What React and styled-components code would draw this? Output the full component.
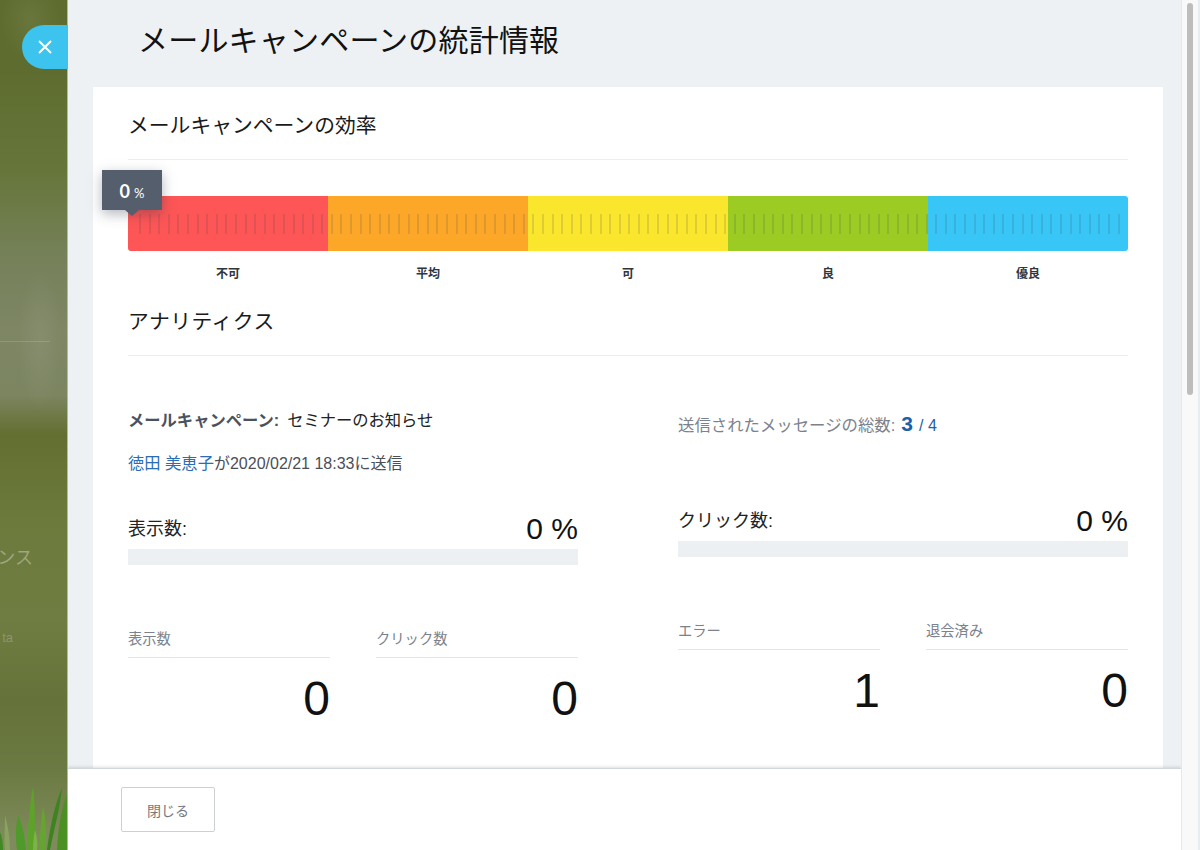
import React from 'react'
import styled, { createGlobalStyle } from 'styled-components'

const GlobalStyle = createGlobalStyle`
  html, body {
    margin: 0;
    height: 100%;
    overflow: hidden;
  }
  body {
    font-family: "Liberation Sans", "Noto Sans CJK JP", sans-serif;
    color: #1c1c1e;
    background: #fff;
  }
  * {
    box-sizing: border-box;
  }
`

const Page = styled.div`
  display: flex;
  width: 1200px;
  height: 850px;
  overflow: hidden;
`

const Backdrop = styled.aside`
  position: relative;
  flex: 0 0 68px;
  overflow: hidden;
  background:
    radial-gradient(ellipse 22px 70px at 40px 340px, rgba(150, 155, 130, .35), transparent),
    radial-gradient(ellipse 30px 40px at 30px 20px, rgba(130, 140, 90, .3), transparent),
    linear-gradient(
      180deg,
      #5f6c30 0,
      #5e6c2f 70px,
      #66763a 170px,
      #76815a 260px,
      #7e8664 330px,
      #7c8560 395px,
      #626f30 435px,
      #6c7a3c 520px,
      #6f7d42 620px,
      #65733a 700px,
      #6b7a42 770px,
      #7f8b5c 840px
    );
  border-right: 1px solid #b3b99a;
`

const BackdropRule = styled.div`
  position: absolute;
  left: 0;
  top: 341px;
  width: 50px;
  height: 1px;
  background: rgba(255, 255, 255, .14);
`

const BackdropText = styled.span`
  position: absolute;
  top: ${p => p.$top}px;
  right: ${p => p.$right}px;
  font-size: ${p => p.$size}px;
  line-height: 1;
  white-space: nowrap;
  color: rgba(255, 255, 255, ${p => p.$alpha});
`

const Grass = styled.svg`
  position: absolute;
  left: 0;
  bottom: 0;
  width: 67px;
  height: 64px;
  filter: blur(.4px);
`

const CloseTab = styled.button`
  position: absolute;
  left: 22px;
  top: 25px;
  z-index: 5;
  display: flex;
  align-items: center;
  justify-content: flex-start;
  width: 46px;
  height: 44px;
  padding: 0 0 0 16px;
  border: 0;
  border-radius: 22px 0 0 22px;
  background: #3cc3ee;
`

const Panel = styled.main`
  flex: 1;
  display: flex;
  flex-direction: column;
  min-width: 0;
`

const Content = styled.div`
  flex: 1;
  min-height: 0;
  overflow: hidden;
  padding: 0 18px 0 25px;
  background: #edf1f4;
`

const PageTitle = styled.h1`
  margin: 0;
  height: 87px;
  padding: 19px 0 0 45px;
  font-size: 30px;
  line-height: 44px;
  font-weight: 400;
  letter-spacing: .2px;
  color: #111;
`

const Card = styled.div`
  min-height: 700px;
  padding: 0 35px;
  background: #fff;
`

const SectionTitle = styled.h2`
  margin: 0;
  height: 73px;
  padding-top: 24px;
  font-size: 20.8px;
  line-height: 30px;
  font-weight: 400;
  color: #1a1a1a;
  border-bottom: 1px solid #ebedef;
`

const Meter = styled.div`
  position: relative;
  height: 55px;
  margin-top: 36px;
`

const MeterBands = styled.div`
  display: flex;
  height: 100%;
  border-radius: 3px;
  overflow: hidden;
`

const MeterBand = styled.div`
  flex: 1;
  background: ${p => p.$color};
`

const TickRow = styled.div`
  position: absolute;
  left: 11px;
  right: 8px;
  top: 18px;
  bottom: 17px;
  display: flex;
  justify-content: space-between;
`

const Tick = styled.i`
  width: 2px;
  background: rgba(70, 70, 80, .16);
`

const Marker = styled.div`
  position: absolute;
  z-index: 2;
  left: -26px;
  top: -26px;
  width: 60px;
  height: 40px;
  display: flex;
  align-items: baseline;
  justify-content: center;
  gap: 4px;
  padding-top: 10px;
  color: #fff;
  font-family: Lato, "Liberation Sans", sans-serif;
  font-size: 18px;
  line-height: 22px;
  font-weight: 700;
  background: #555e6c;
  box-shadow: 0 4px 12px rgba(40, 50, 70, .35);
  &::after {
    content: "";
    position: absolute;
    left: 23px;
    top: 40px;
    border: 7px solid transparent;
    border-top: 6px solid #555e6c;
    border-bottom: 0;
  }
`

const MarkerUnit = styled.span`
  font-size: 13px;
  font-weight: 400;
`

const MeterLabels = styled.div`
  display: flex;
  margin-top: 15px;
`

const MeterLabel = styled.div`
  flex: 1;
  text-align: center;
  font-size: 12px;
  line-height: 16px;
  font-weight: 700;
  color: #2e3640;
`

const AnalyticsTitle = styled(SectionTitle)`
  height: 67px;
  padding-top: 18px;
  margin-top: 7px;
  letter-spacing: .5px;
`

const Columns = styled.div`
  display: grid;
  grid-template-columns: 450px 450px;
  justify-content: space-between;
`

const Column = styled.section`
  padding-top: ${p => p.$top}px;
`

const CampaignLine = styled.div`
  display: flex;
  gap: 8px;
  font-size: 16.3px;
  line-height: 22px;
  color: #222;
`

const CampaignKey = styled.strong`
  color: #4a5260;
  font-weight: 700;
`

const SentLine = styled.div`
  margin-top: 21px;
  font-size: 16px;
  line-height: 22px;
  color: #4a4f57;
`

const SenderLink = styled.a`
  color: #2a6db5;
  font-size: 16.3px;
`

const TotalLine = styled.div`
  display: flex;
  align-items: baseline;
  font-size: 16.4px;
  line-height: 24px;
  color: #7b828c;
`

const TotalValue = styled.strong`
  margin-left: 6px;
  font-size: 21px;
  color: #1f5fa8;
`

const TotalRest = styled.span`
  margin-left: 6px;
  font-size: 16px;
  color: #1f5fa8;
`

const RateHead = styled.div`
  display: flex;
  align-items: center;
  justify-content: space-between;
  margin-top: ${p => p.$top}px;
`

const RateName = styled.span`
  font-size: 18px;
  line-height: 24px;
  color: #222;
`

const RateValue = styled.span`
  font-size: 30px;
  line-height: 32px;
  color: #111;
`

const RateTrack = styled.div`
  height: 16px;
  margin-top: 4px;
  background: #ecf0f2;
`

const Stats = styled.div`
  display: grid;
  grid-template-columns: 202px 202px;
  justify-content: space-between;
  margin-top: 65px;
`

const StatName = styled.div`
  height: 28px;
  font-size: 14.3px;
  line-height: 18px;
  color: #7b828c;
  border-bottom: 1px solid #e3e6e9;
`

const StatValue = styled.div`
  margin-top: 16px;
  text-align: right;
  font-size: 48px;
  line-height: 50px;
  color: #111;
`

const Scrollbar = styled.div`
  flex: 0 0 19px;
  padding: 3px 5px 0 5px;
  background: #f9f9f9;
  border-left: 1px solid #e6e8ea;
  border-right: 2px solid #e8ecef;
`

const ScrollThumb = styled.div`
  height: 392px;
  border-radius: 5px;
  background: #bdbdbd;
`

const Footer = styled.footer`
  flex: 0 0 82px;
  padding: 18px 0 0 53px;
  background: #fff;
  border-top: 1px solid #d3d6da;
  box-shadow: 0 -1px 3px rgba(60, 70, 80, .18);
`

const CloseButton = styled.button`
  width: 94px;
  height: 45px;
  padding: 0;
  font-family: inherit;
  font-size: 14px;
  color: #77797c;
  background: #fff;
  border: 1px solid #cdd0d3;
  border-radius: 2px;
`

const bands = [
  { color: '#fe5656', label: '不可' },
  { color: '#fda729', label: '平均' },
  { color: '#fbe62e', label: '可' },
  { color: '#9ccc24', label: '良' },
  { color: '#38c6f6', label: '優良' },
]

const ticks = Array.from({ length: 103 }, (_, i) => i)

function Stat({ name, value }) {
  return (
    <div>
      <StatName>{name}</StatName>
      <StatValue>{value}</StatValue>
    </div>
  )
}

export default function App() {
  return (
    <Page>
      <GlobalStyle />
      <Backdrop>
        <BackdropRule />
        <BackdropText $top={549} $right={34} $size={18} $alpha={0.35}>ンス</BackdropText>
        <BackdropText $top={631} $right={54} $size={13} $alpha={0.22}>ta</BackdropText>
        <Grass viewBox="0 0 67 64">
          <path d="M5 64C4 50 5 38 5 29c3 11 5 23 5 35z" fill="#8aa25f" />
          <path d="M0 64V46c2 4 3 10 3 18z" fill="#3f8a22" />
          <path d="M17 64c-2-14-1-26 1-35 5 11 7 23 8 35z" fill="#4f9a2a" />
          <path d="M27 64C28 40 30 15 33 1c2 14 2 39 2 63z" fill="#5da32a" />
          <path d="M33 64c0-8 1-16 2-20 2 6 3 14 2 20z" fill="#7bb347" />
          <path d="M39 64c1-14 2-32 4-43 3 11 4 29 2 43z" fill="#64a530" />
          <path d="M47 64C50 40 55 18 62 2c-2 20-8 42-12 62z" fill="#3d8420" />
          <path d="M57 64c1-24 5-42 10-56v56z" fill="#4a9023" />
        </Grass>
      </Backdrop>
      <CloseTab aria-label="閉じる">
        <svg width="14" height="14" viewBox="0 0 14 14">
          <path d="M1 1l12 12M13 1L1 13" stroke="#fff" strokeWidth="2" />
        </svg>
      </CloseTab>
      <Panel>
        <Content>
          <PageTitle>メールキャンペーンの統計情報</PageTitle>
          <Card>
            <SectionTitle>メールキャンペーンの効率</SectionTitle>
            <Meter>
              <Marker>0<MarkerUnit>%</MarkerUnit></Marker>
              <MeterBands>
                {bands.map(b => <MeterBand key={b.label} $color={b.color} />)}
              </MeterBands>
              <TickRow>
                {ticks.map(i => <Tick key={i} />)}
              </TickRow>
            </Meter>
            <MeterLabels>
              {bands.map(b => <MeterLabel key={b.label}>{b.label}</MeterLabel>)}
            </MeterLabels>
            <AnalyticsTitle>アナリティクス</AnalyticsTitle>
            <Columns>
              <Column $top={53}>
                <CampaignLine>
                  <CampaignKey>メールキャンペーン:</CampaignKey>
                  <span>セミナーのお知らせ</span>
                </CampaignLine>
                <SentLine><SenderLink>徳田 美恵子</SenderLink>が2020/02/21 18:33に送信</SentLine>
                <RateHead $top={38}>
                  <RateName>表示数:</RateName>
                  <RateValue>0 %</RateValue>
                </RateHead>
                <RateTrack />
                <Stats>
                  <Stat name="表示数" value="0" />
                  <Stat name="クリック数" value="0" />
                </Stats>
              </Column>
              <Column $top={56}>
                <TotalLine>
                  送信されたメッセージの総数:
                  <TotalValue>3</TotalValue>
                  <TotalRest>/ 4</TotalRest>
                </TotalLine>
                <RateHead $top={67}>
                  <RateName>クリック数:</RateName>
                  <RateValue>0 %</RateValue>
                </RateHead>
                <RateTrack />
                <Stats>
                  <Stat name="エラー" value="1" />
                  <Stat name="退会済み" value="0" />
                </Stats>
              </Column>
            </Columns>
          </Card>
        </Content>
        <Footer>
          <CloseButton>閉じる</CloseButton>
        </Footer>
      </Panel>
      <Scrollbar>
        <ScrollThumb />
      </Scrollbar>
    </Page>
  )
}
